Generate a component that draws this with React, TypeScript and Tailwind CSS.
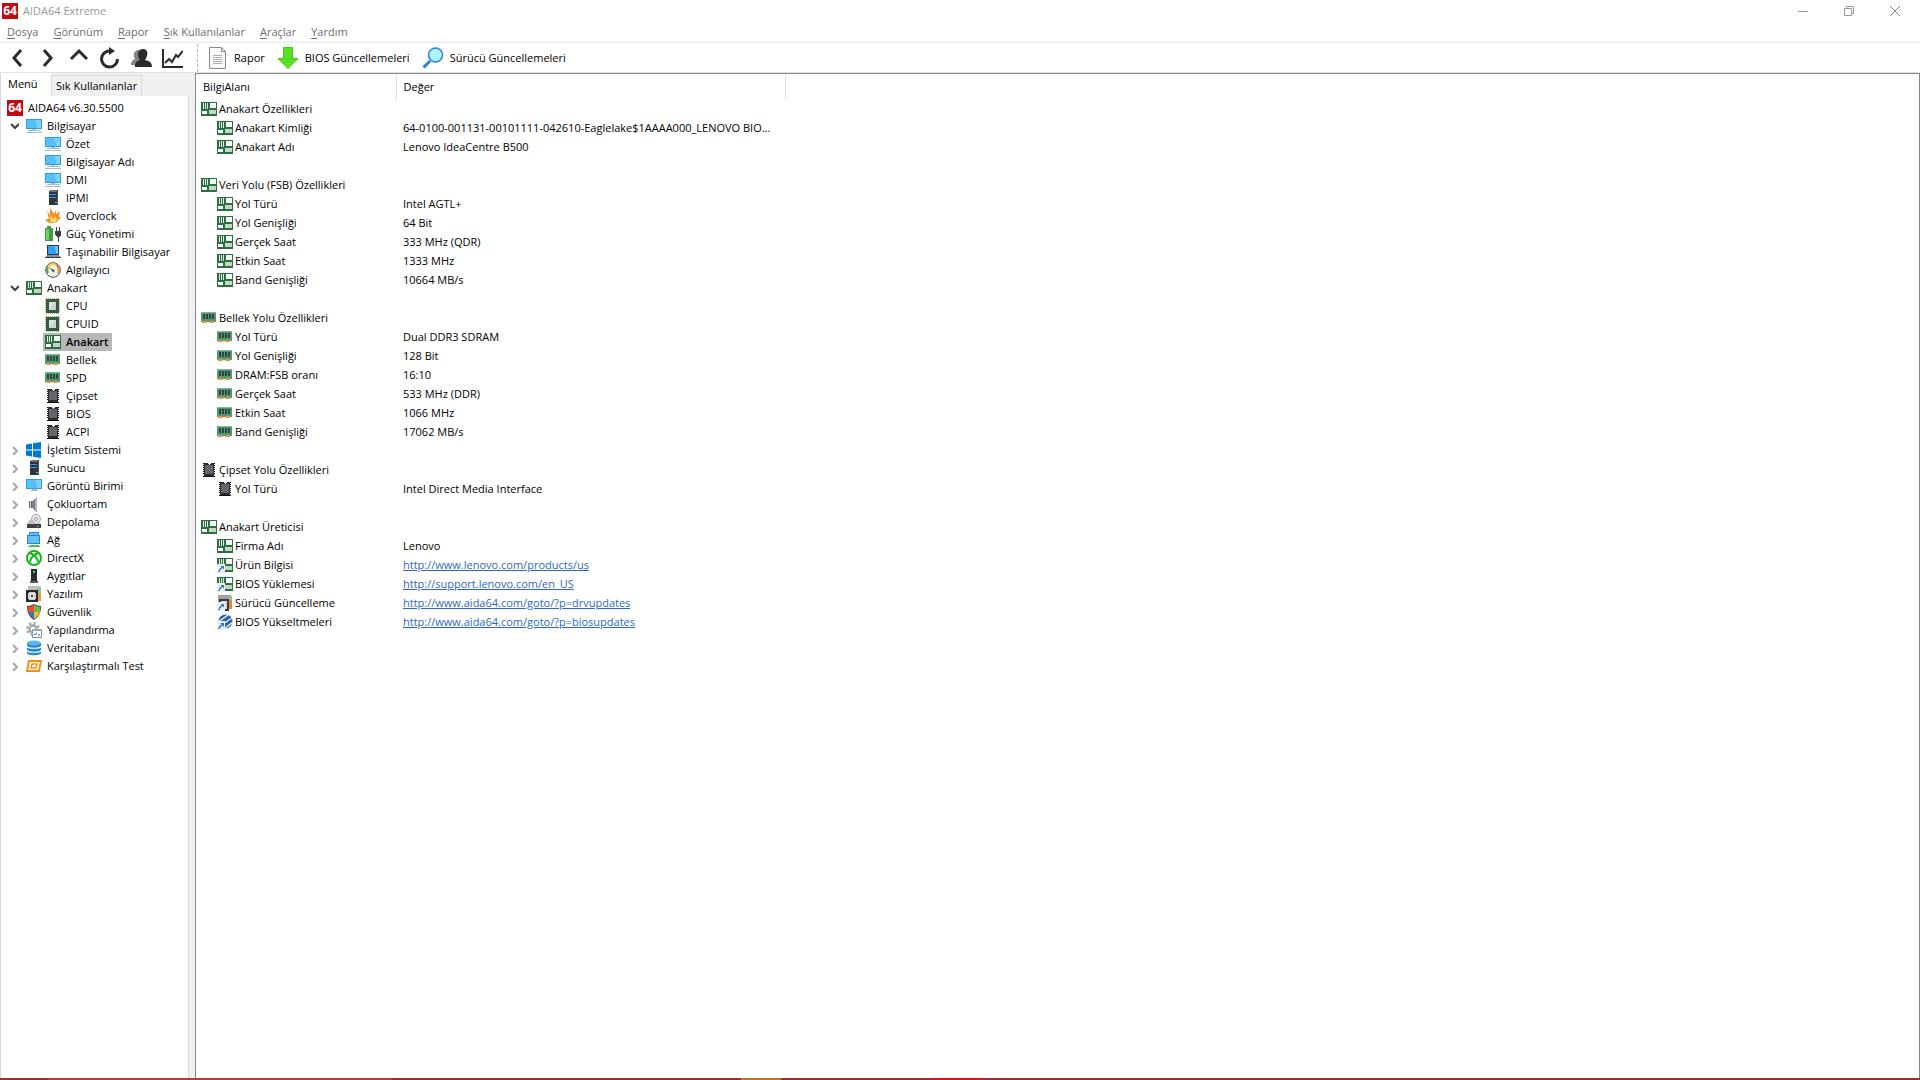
import { useState } from 'react';
import type { ReactNode } from 'react';
import clsx from 'clsx';

type IconName =
  | 'monitor' | 'server' | 'flame' | 'battery' | 'laptop' | 'gauge' | 'board' | 'cpu' | 'ram' | 'chip'
  | 'windows' | 'speaker' | 'disk' | 'network' | 'directx' | 'device' | 'software' | 'shield' | 'config'
  | 'database' | 'benchmark' | 'boardLink' | 'driverLink' | 'biosLink' | 'logo' | 'display';

const Board = () => (
  <>
    <rect x="0" y="1" width="16" height="14" fill="#2a7040" />
    <path d="M2 2h1v6H2zM4 2h1v6H4zM6 2h1v6H6z" fill="#dfeae1" />
    <path d="M9 2h6v5H9z" fill="#fff" />
    <path d="M1 10h5v3H1z" fill="#fff" />
    <path d="M8 9h7v4H8z" fill="#c5d6c6" />
  </>
);

const Shortcut = () => (
  <>
    <rect x="0" y="7" width="8" height="9" fill="#e9eef3" />
    <path d="M2 15c0-2 1-3 3-4" stroke="#3779c4" strokeWidth="1.4" fill="none" />
    <path d="M3 9h4v4z" fill="#3779c4" />
  </>
);

const Screen = () => (
  <>
    <rect x="0" y="1" width="16" height="10" fill="#2f9be0" />
    <rect x="1" y="2" width="14" height="8" fill="#55c0fa" />
    <path d="M9 2h6v8h-3z" fill="#7dd3ff" />
  </>
);

const ICONS: Record<IconName, ReactNode> = {
  logo: null,
  monitor: (
    <>
      <Screen />
      <path d="M6 11h4v1H6z" fill="#b4bec9" />
      <path d="M2 12h13v1H2zM0 14h16v1H0z" fill="#a9b7c7" />
    </>
  ),
  display: (
    <>
      <Screen />
      <path d="M6 11h5v1H6zM5 12h7v1H5z" fill="#a9b7c7" />
    </>
  ),
  server: (
    <>
      <path d="M4 1l1-1h7l1 1v14H4z" fill="#30343a" />
      <path d="M5 0h7v2H5z" fill="#6b7178" />
      <path d="M4 4h7v1H4zM4 7h7v1H4z" fill="#3f97f5" />
      <path d="M10 12h2v1h-2z" fill="#38d6dd" />
      <path d="M12 3h1v12h-1z" fill="#555b62" />
    </>
  ),
  flame: (
    <>
      <path d="M2 3l3 4 0-7 4 6 2-4v4l4-3-2 5 3 1-4 5-4 1H5l-4-2 3-2z" fill="#f6921f" />
      <path d="M5 12l1-5 2 4 3-3v3l2 0-3 3H6z" fill="#ffe16a" />
      <path d="M0 12l4-1-1 2zM13 7l2-2-2 4z" fill="#e86e17" />
    </>
  ),
  battery: (
    <>
      <path d="M2 0h4v2H2zM0 2h8v13H0z" fill="#3c9e3f" />
      <path d="M1 3h3v11H1z" fill="#6fd069" />
      <path d="M11 1h1v4h2V1h1v4h1v4l-2 2v5h-1v-5l-3-2V5h1z" fill="#3f3f3f" />
    </>
  ),
  laptop: (
    <>
      <path d="M2 1h12v10H2z" fill="#34373b" />
      <path d="M3 2h10v8H3z" fill="#389ff0" />
      <path d="M9 2h4v8h-1z" fill="#72c3ff" />
      <path d="M2 11h12l2 3H0z" fill="#8b9095" />
      <path d="M0 13h16v1H0z" fill="#33363a" />
    </>
  ),
  gauge: (
    <>
      <circle cx="8" cy="8" r="7.3" fill="#f4f3ea" stroke="#4a4a4a" strokeWidth="1" />
      <path d="M3 11a6 6 0 0 1 0-6" stroke="#54a646" strokeWidth="2" fill="none" />
      <path d="M3 5a6 6 0 0 1 8-2" stroke="#f0cf44" strokeWidth="2" fill="none" />
      <path d="M11 3a6 6 0 0 1 2 8" stroke="#ea8a2b" strokeWidth="2" fill="none" />
      <path d="M4 5.500l6 3-1.500 2z" fill="#3d5a3d" />
    </>
  ),
  board: <Board />,
  boardLink: (
    <>
      <Board />
      <Shortcut />
    </>
  ),
  cpu: (
    <>
      <path d="M1 0.500h13M1 15.500h13M0.500 1v14M14.500 1v14" stroke="#c9a046" strokeDasharray="1 1" />
      <rect x="1" y="1" width="13" height="14" fill="#2d5f48" />
      <rect x="4" y="4" width="7" height="8" fill="#dcdfde" />
      <path d="M4 12l7-8v8z" fill="#cdd1cf" />
    </>
  ),
  ram: (
    <>
      <path d="M0 3h15v9H0z" fill="#4c9b74" />
      <path d="M2 4h2v5H2zM5 4h2v5H5zM8 4h2v5H8zM11 4h2v5h-2z" fill="#38433d" />
      <path d="M1 11h5v2H1zM8 11h5v2H8z" fill="#da9a49" />
      <path d="M0 2h15v1H0z" fill="#7ab898" />
    </>
  ),
  chip: (
    <>
      <path d="M2 1h3v1H2zM11 1h3v1h-3zM2 14h12v1H2zM2 3h1v1H2zM2 5h1v1H2zM2 7h1v1H2zM2 9h1v1H2zM2 11h1v1H2zM13 3h1v1h-1zM13 5h1v1h-1zM13 7h1v1h-1zM13 9h1v1h-1zM13 11h1v1h-1z" fill="#111" />
      <path d="M3 1h3l2 2 2-2h3v13H3z" fill="#2a2b2d" />
      <path d="M4 3h3l1 1 1-1h3v9H4z" fill="#63666a" />
    </>
  ),
  windows: <path d="M0 2.500L6 1.500v6H0zM7 1.300L15 0v7.500H7zM0 8.500h6v6L0 13.500zM7 8.500h8V16l-8-1.300z" fill="#0078d7" />,
  speaker: (
    <>
      <path d="M3 5h3v7H3z" fill="#646a70" />
      <path d="M6 5l5-5v16l-5-4z" fill="#7d8388" />
      <path d="M9 2l2-2v16l-2-2z" fill="#b3b8bb" />
      <path d="M4 5h1v7H4z" fill="#cfd3d6" />
    </>
  ),
  disk: (
    <>
      <circle cx="10" cy="5" r="4.500" fill="#e8e8e8" stroke="#a8a8a8" />
      <circle cx="10" cy="5" r="1.500" fill="#fff" stroke="#999" />
      <path d="M3 6h5l1 3h5v3H1z" fill="#c4c4c4" />
      <path d="M1 10h14v4H1z" fill="#3e4145" />
      <path d="M11 12h2v1h-2z" fill="#45d750" />
    </>
  ),
  network: (
    <>
      <path d="M3 0h10v8H3z" fill="#2d8fd6" />
      <path d="M4 1h8v6H4z" fill="#62bdf3" />
      <path d="M1 3h13v9H1z" fill="#2385cf" />
      <path d="M2 4h11v7H2z" fill="#66bff4" />
      <path d="M4 13h9v1H4zM2 14h12v1H2z" fill="#45c24c" />
    </>
  ),
  directx: (
    <>
      <circle cx="8" cy="8" r="7" fill="#fff" stroke="#16b51b" strokeWidth="2" />
      <path d="M4 3c5 2 8 6 8 9M12 3c-5 2-8 6-8 9" stroke="#16b51b" strokeWidth="2" fill="none" />
    </>
  ),
  device: (
    <>
      <path d="M5 1h6v12H5z" fill="#292c2f" />
      <path d="M7 3h2v2H7z" fill="#3be24f" />
      <path d="M4 13h8v2H4z" fill="#5a5d60" />
    </>
  ),
  software: (
    <>
      <path d="M2 0h13v11H2z" fill="#b9c1c4" />
      <path d="M11 3h4v12h-4z" fill="#e89b53" />
      <path d="M12 2h3v5h-3z" fill="#8cc7a1" />
      <path d="M0 4h12v12H0z" fill="#2a2a2a" />
      <circle cx="6" cy="10" r="4.500" fill="#d8d8d8" />
      <circle cx="6" cy="10" r="1.500" fill="#4a4a4a" />
    </>
  ),
  shield: (
    <>
      <path d="M8 0c2 1 5 2 7 2 0 7-2 11-7 14C3 13 1 9 1 2c2 0 5-1 7-2z" fill="#4e4e4e" />
      <path d="M8 1v7H2V3c2 0 4-1 6-2z" fill="#e8502f" />
      <path d="M8 1c2 1 4 2 6 2v5H8z" fill="#74b841" />
      <path d="M2 8h6v7c-3-2-5-4-6-7z" fill="#3477c9" />
      <path d="M8 8h6c-1 3-3 5-6 7z" fill="#f3bd33" />
    </>
  ),
  config: (
    <>
      <circle cx="7" cy="7" r="5.500" fill="none" stroke="#a3abb2" strokeWidth="3" strokeDasharray="2.200 2.100" />
      <circle cx="7" cy="7" r="3.500" fill="none" stroke="#a3abb2" strokeWidth="2.500" />
      <path d="M6.500 7.500h9v8h-9z" fill="#f7fbff" stroke="#89939c" />
      <path d="M6 7h10v2H6z" fill="#a3abb2" />
      <path d="M8 12l1 1 2-2M12 13h2" stroke="#2d7fce" fill="none" />
    </>
  ),
  database: (
    <>
      <path d="M1 3v10c0 3 14 3 14 0V3z" fill="#2587d2" />
      <ellipse cx="8" cy="3" rx="7" ry="2.500" fill="#5ab4ee" />
      <path d="M1 6c0 3 14 3 14 0M1 10c0 3 14 3 14 0" stroke="#fff" strokeWidth="1.200" fill="none" />
    </>
  ),
  benchmark: (
    <>
      <path d="M3 3h12l-2 10H1z" fill="#fff" stroke="#f7900f" strokeWidth="2" />
      <path d="M6 6h5l-1 4H5z" fill="#fff" stroke="#f7900f" strokeWidth="1.600" />
    </>
  ),
  driverLink: (
    <>
      <path d="M1 0h13v11H1z" fill="#9ba4a8" />
      <path d="M12 1h3v13h-3z" fill="#d98b4e" />
      <path d="M12 1h3v4h-3z" fill="#8cc7a1" />
      <path d="M2 4h10v12H2z" fill="#3a3a3a" />
      <path d="M4 6h6v8H4z" fill="#dedede" />
      <Shortcut />
    </>
  ),
  biosLink: (
    <>
      <circle cx="8.500" cy="7.500" r="7" fill="#2b63a8" />
      <path d="M1 8L11 1M3 12L15 4M7 15l9-7" stroke="#e6eff9" strokeWidth="1.500" />
      <Shortcut />
    </>
  ),
};

const SMOOTH: IconName[] = ['gauge', 'directx', 'disk', 'config', 'database', 'shield', 'windows', 'benchmark', 'flame', 'biosLink'];

const Icon = ({ name }: { name: IconName }) => {
  if (name === 'logo') {
    return (
      <span className="flex h-4 w-4 shrink-0 items-center justify-center bg-[#c00c12] text-xs font-bold leading-4 text-white">
        64
      </span>
    );
  }
  return (
    <svg viewBox="0 0 16 16" className="h-4 w-4 shrink-0" shapeRendering={SMOOTH.includes(name) ? 'auto' : 'crispEdges'} aria-hidden="true">
      {ICONS[name]}
    </svg>
  );
};

const Chevron = ({ open }: { open: boolean }) => (
  <svg viewBox="0 0 10 10" className="h-2.5 w-2.5 shrink-0" fill="none" strokeWidth="2" aria-hidden="true">
    {open ? <path d="M2 3l4 4 4-4" stroke="#404040" /> : <path d="M4 2l4 4-4 4" stroke="#a6a6a6" />}
  </svg>
);

const menus = ['Dosya', 'Görünüm', 'Rapor', 'Sık Kullanılanlar', 'Araçlar', 'Yardım'];

type Node = { icon: IconName; label: string; children?: Node[] };

const tree: Node[] = [
  {
    icon: 'monitor',
    label: 'Bilgisayar',
    children: [
      { icon: 'monitor', label: 'Özet' },
      { icon: 'monitor', label: 'Bilgisayar Adı' },
      { icon: 'monitor', label: 'DMI' },
      { icon: 'server', label: 'IPMI' },
      { icon: 'flame', label: 'Overclock' },
      { icon: 'battery', label: 'Güç Yönetimi' },
      { icon: 'laptop', label: 'Taşınabilir Bilgisayar' },
      { icon: 'gauge', label: 'Algılayıcı' },
    ],
  },
  {
    icon: 'board',
    label: 'Anakart',
    children: [
      { icon: 'cpu', label: 'CPU' },
      { icon: 'cpu', label: 'CPUID' },
      { icon: 'board', label: 'Anakart' },
      { icon: 'ram', label: 'Bellek' },
      { icon: 'ram', label: 'SPD' },
      { icon: 'chip', label: 'Çipset' },
      { icon: 'chip', label: 'BIOS' },
      { icon: 'chip', label: 'ACPI' },
    ],
  },
  { icon: 'windows', label: 'İşletim Sistemi' },
  { icon: 'server', label: 'Sunucu' },
  { icon: 'display', label: 'Görüntü Birimi' },
  { icon: 'speaker', label: 'Çokluortam' },
  { icon: 'disk', label: 'Depolama' },
  { icon: 'network', label: 'Ağ' },
  { icon: 'directx', label: 'DirectX' },
  { icon: 'device', label: 'Aygıtlar' },
  { icon: 'software', label: 'Yazılım' },
  { icon: 'shield', label: 'Güvenlik' },
  { icon: 'config', label: 'Yapılandırma' },
  { icon: 'database', label: 'Veritabanı' },
  { icon: 'benchmark', label: 'Karşılaştırmalı Test' },
];

type Row = { icon: IconName; label: string; value?: string };
type Group = { icon: IconName; title: string; rows: Row[] };

const groups: Group[] = [
  {
    icon: 'board',
    title: 'Anakart Özellikleri',
    rows: [
      { icon: 'board', label: 'Anakart Kimliği', value: '64-0100-001131-00101111-042610-Eaglelake$1AAAA000_LENOVO BIO...' },
      { icon: 'board', label: 'Anakart Adı', value: 'Lenovo IdeaCentre B500' },
    ],
  },
  {
    icon: 'board',
    title: 'Veri Yolu (FSB) Özellikleri',
    rows: [
      { icon: 'board', label: 'Yol Türü', value: 'Intel AGTL+' },
      { icon: 'board', label: 'Yol Genişliği', value: '64 Bit' },
      { icon: 'board', label: 'Gerçek Saat', value: '333 MHz (QDR)' },
      { icon: 'board', label: 'Etkin Saat', value: '1333 MHz' },
      { icon: 'board', label: 'Band Genişliği', value: '10664 MB/s' },
    ],
  },
  {
    icon: 'ram',
    title: 'Bellek Yolu Özellikleri',
    rows: [
      { icon: 'ram', label: 'Yol Türü', value: 'Dual DDR3 SDRAM' },
      { icon: 'ram', label: 'Yol Genişliği', value: '128 Bit' },
      { icon: 'ram', label: 'DRAM:FSB oranı', value: '16:10' },
      { icon: 'ram', label: 'Gerçek Saat', value: '533 MHz (DDR)' },
      { icon: 'ram', label: 'Etkin Saat', value: '1066 MHz' },
      { icon: 'ram', label: 'Band Genişliği', value: '17062 MB/s' },
    ],
  },
  {
    icon: 'chip',
    title: 'Çipset Yolu Özellikleri',
    rows: [{ icon: 'chip', label: 'Yol Türü', value: 'Intel Direct Media Interface' }],
  },
  {
    icon: 'board',
    title: 'Anakart Üreticisi',
    rows: [
      { icon: 'board', label: 'Firma Adı', value: 'Lenovo' },
      { icon: 'boardLink', label: 'Ürün Bilgisi', value: 'http://www.lenovo.com/products/us' },
      { icon: 'boardLink', label: 'BIOS Yüklemesi', value: 'http://support.lenovo.com/en_US' },
      { icon: 'driverLink', label: 'Sürücü Güncelleme', value: 'http://www.aida64.com/goto/?p=drvupdates' },
      { icon: 'biosLink', label: 'BIOS Yükseltmeleri', value: 'http://www.aida64.com/goto/?p=biosupdates' },
    ],
  },
];

const navButtons: { label: string; art: ReactNode }[] = [
  { label: 'Geri', art: <path d="M15 3l-7 8 7 8" strokeWidth="3" /> },
  { label: 'İleri', art: <path d="M7 3l7 8-7 8" strokeWidth="3" /> },
  { label: 'Yukarı', art: <path d="M3 12l8-8 8 8" strokeWidth="3" /> },
  {
    label: 'Yenile',
    art: (
      <>
        <path d="M11 4a8 8 0 1 0 7.500 8" strokeWidth="3" />
        <path d="M10 0l6 4-6 4z" fill="#2b2b2b" stroke="none" />
      </>
    ),
  },
  {
    label: 'Kullanıcılar',
    art: (
      <g stroke="none">
        <path d="M1 18c0-3 1-5 4-6-2-3-2-9 4-9 1 0 2 0 2 1-3 3-2 6 0 9l-5 5z" fill="#858585" />
        <path d="M5 20c0-5 2-6 5-7-3-4-3-11 3-11s5 7 2 11c4 1 7 2 7 7z" fill="#2b2b2b" />
      </g>
    ),
  },
  { label: 'Grafik', art: <path d="M2 2v18h20M4 16l4-4 3 3 4-7 2 2 5-6" strokeWidth="2" /> },
];

const TreeItem = ({ node, selected, onSelect }: { node: Node; selected: string; onSelect: (label: string) => void }) => {
  const [open, setOpen] = useState(!!node.children);
  return (
    <li>
      <button type="button" onClick={() => setOpen(!open)} aria-expanded={open} className="flex h-[18px] items-center pl-2">
        <Chevron open={open} />
        <span className="flex items-center gap-[5px] pl-[7px]">
          <Icon name={node.icon} />
          {node.label}
        </span>
      </button>
      {open && node.children && (
        <ul>
          {node.children.map((child) => {
            const active = child.label === selected;
            return (
              <li key={child.label} className="flex pl-[42px]">
                <button
                  type="button"
                  onClick={() => onSelect(child.label)}
                  className={clsx('flex h-[18px] items-center gap-[5px] pr-1 pl-0.5', active && 'bg-[#b8b8b8] font-semibold')}
                >
                  <Icon name={child.icon} />
                  {child.label}
                </button>
              </li>
            );
          })}
        </ul>
      )}
    </li>
  );
};

const GroupRows = ({ group, last }: { group: Group; last: boolean }) => (
  <>
    <tr className="h-[19px]">
      <td className="p-0 pl-[5px]" colSpan={2}>
        <span className="flex items-center gap-0.5">
          <Icon name={group.icon} />
          {group.title}
        </span>
      </td>
    </tr>
    {group.rows.map((row) => (
      <tr key={row.label} className="h-[19px]">
        <td className="p-0 pl-[21px]">
          <span className="flex items-center gap-0.5">
            <Icon name={row.icon} />
            {row.label}
          </span>
        </td>
        <td className="p-0 pl-[7px]">
          {row.value?.startsWith('http') ? (
            <a href={row.value} className="text-[#2f66c4] underline">{row.value}</a>
          ) : (
            row.value
          )}
        </td>
      </tr>
    ))}
    {!last && (
      <tr className="h-[19px]" aria-hidden="true">
        <td className="p-0" colSpan={2}></td>
      </tr>
    )}
  </>
);

export default function App() {
  const [selected, setSelected] = useState('Anakart');

  return (
    <div className="flex min-h-screen flex-col bg-white font-['Open_Sans','Noto_Sans',sans-serif] text-[11px] leading-[18px] whitespace-nowrap text-black">
      {/* Title bar */}
      <header className="flex h-[22px] items-center pr-0.5 pl-0.5">
        <Icon name="logo" />
        <h1 className="pl-[5px] text-[#999999]">AIDA64 Extreme</h1>
        <div className="ml-auto flex">
          <button type="button" aria-label="Simge durumuna küçült" className="flex h-5 w-[46px] items-center justify-center">
            <svg viewBox="0 0 10 10" className="h-2.5 w-2.5" shapeRendering="crispEdges"><path d="M0 5h10v1H0z" fill="#999" /></svg>
          </button>
          <button type="button" aria-label="Önceki boyut" className="flex h-5 w-[46px] items-center justify-center">
            <svg viewBox="0 0 10 10" className="h-2.5 w-2.5" fill="none" stroke="#999"><path d="M0.500 2.500h7v7h-7zM2.500 2V0.500h7v7H8" /></svg>
          </button>
          <button type="button" aria-label="Kapat" className="flex h-5 w-[46px] items-center justify-center">
            <svg viewBox="0 0 10 10" className="h-2.5 w-2.5" fill="none" stroke="#888"><path d="M0 0l10 10M10 0L0 10" /></svg>
          </button>
        </div>
      </header>

      {/* Menu bar */}
      <nav className="flex h-[21px] items-center gap-[15px] border-b-2 border-[#f0f0f0] pl-[7px] text-[#6d6d6d]">
        {menus.map((item) => (
          <button key={item} type="button">
            <span className="underline underline-offset-2">{item[0]}</span>
            {item.slice(1)}
          </button>
        ))}
      </nav>

      {/* Toolbar */}
      <div className="flex h-[30px] items-center border-b border-[#e0e0e3] pl-px">
        {navButtons.map((btn) => (
          <button key={btn.label} type="button" aria-label={btn.label} className="flex w-[31px] justify-center">
            <svg viewBox="0 0 22 22" className="h-[22px] w-[22px]" fill="none" stroke="#2b2b2b">{btn.art}</svg>
          </button>
        ))}
        <span className="ml-2.5 h-7 border-l border-dashed border-[#b5b5b5]" />
        <button type="button" className="ml-2 flex items-center gap-1.5">
          <svg viewBox="0 0 22 22" className="h-[22px] w-[22px]">
            <path d="M3.500 0.500h12l4 4v17h-16z" fill="#fafafa" stroke="#8a8a8a" />
            <path d="M15.500 0.500v4h4" fill="none" stroke="#8a8a8a" />
            <path d="M7 8.500h9M7 10.500h9M7 12.500h9M7 14.500h9M7 16.500h9" stroke="#b0b0b0" />
          </svg>
          Rapor
        </button>
        <button type="button" className="ml-3 flex items-center gap-1.5">
          <svg viewBox="0 0 22 22" className="h-[22px] w-[22px]">
            <path d="M6.500 0.500h9v11h5.500L11 21.500 1 11.500h5.500z" fill="#57e01f" stroke="#4cc41d" />
          </svg>
          BIOS Güncellemeleri
        </button>
        <button type="button" className="ml-3 flex items-center gap-1.5">
          <svg viewBox="0 0 22 22" className="h-[22px] w-[22px]">
            <path d="M1.500 20.500L8 14" stroke="#2c7fd1" strokeWidth="3" />
            <circle cx="13.500" cy="8" r="7" fill="#aef2ff" stroke="#3180d2" strokeWidth="1.500" />
          </svg>
          Sürücü Güncellemeleri
        </button>
      </div>

      <main className="flex flex-1 bg-[#f0f0f0]">
        {/* Navigation tree */}
        <aside className="flex w-[189px] shrink-0 flex-col">
          <div className="flex items-end">
            <button type="button" className="h-[23px] w-[51px] border-l border-[#d9d9d9] bg-white pb-0.5 pl-[7px] text-left">Menü</button>
            <button type="button" className="h-[21px] border border-b-0 border-[#d9d9d9] bg-[#f0f0f0] px-1">Sık Kullanılanlar</button>
          </div>
          <div className="flex-1 border-r border-l border-[#d9d9d9] bg-white pt-[3px]">
            <div className="flex h-[18px] items-center gap-[5px] pl-1.5">
              <Icon name="logo" />
              AIDA64 v6.30.5500
            </div>
            <ul>
              {tree.map((node) => (
                <TreeItem key={node.label} node={node} selected={selected} onSelect={setSelected} />
              ))}
            </ul>
          </div>
        </aside>

        {/* Details list */}
        <section className="ml-1.5 flex-1 border-t border-r border-l border-[#828790] bg-white">
          <table className="w-[590px] table-fixed border-collapse">
            <thead>
              <tr className="h-[25px]">
                <th className="w-[200px] border-r border-[#e0e0e0] p-0 pl-[7px] text-left font-normal">BilgiAlanı</th>
                <th className="border-r border-[#e0e0e0] p-0 pl-[7px] text-left font-normal">Değer</th>
              </tr>
            </thead>
            <tbody>
              {groups.map((group, i) => (
                <GroupRows key={group.title} group={group} last={i === groups.length - 1} />
              ))}
            </tbody>
          </table>
        </section>
      </main>

      {/* Visible edge of the taskbar */}
      <footer className="flex h-0.5 bg-[#a02c33]">
        <span className="ml-12 w-[344px] bg-[#b9393f]" />
        <span className="ml-[349px] w-10 bg-[#bd7527]" />
        <span className="ml-[152px] w-12 bg-[#d91414]" />
      </footer>
    </div>
  );
}
